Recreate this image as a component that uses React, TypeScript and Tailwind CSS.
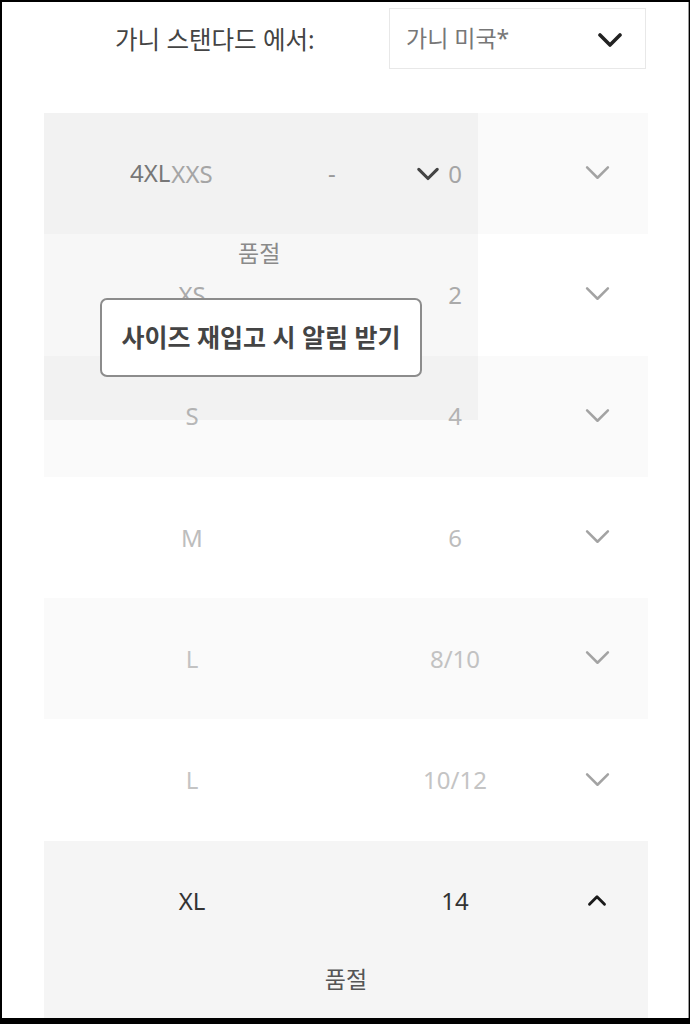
import React from 'react';

type Row = { size: string; num: string; bg: string; color: string };

const rows: Row[] = [
    { size: 'XXS', num: '0', bg: 'bg-[#fafafa]', color: 'text-[#ababab]' },
    { size: 'XS', num: '2', bg: 'bg-white', color: 'text-[#b0b0b0]' },
    { size: 'S', num: '4', bg: 'bg-[#fafafa]', color: 'text-[#b8b8b8]' },
    { size: 'M', num: '6', bg: 'bg-white', color: 'text-[#bdbdbd]' },
    { size: 'L', num: '8/10', bg: 'bg-[#fafafa]', color: 'text-[#c2c2c2]' },
    { size: 'L', num: '10/12', bg: 'bg-white', color: 'text-[#c4c4c4]' },
];

const Chevron = ({ up, className, stroke }: { up?: boolean; className?: string; stroke: number }) => (
    <svg viewBox="0 0 24 24" className={className} fill="none" stroke="currentColor" strokeWidth={stroke} strokeLinecap="round" strokeLinejoin="round">
        <path d={up ? 'M3 16 L12 7 L21 16' : 'M2 8 L12 18 L22 8'} />
    </svg>
);

const font = "font-['Noto_Sans','Noto_Sans_CJK_KR',sans-serif]";

export default function App() {
    return (
        <div className="w-[690px] h-[1024px] bg-black pt-[2px] pl-[2px] pr-[1px] pb-[6px]">
            <div className={`h-full bg-white border-r border-[#9a9a9a] overflow-hidden ${font}`}>
                {/* Kopfzeile mit Auswahl */}
                <div className="flex items-center h-[61px] mt-[6px]">
                    <span className="pl-[113px] text-[24.5px] text-[#444] leading-none mt-[3px]">가니 스탠다드 에서:</span>
                    <div className="ml-auto mr-[42px] w-[257px] h-[61px] border border-[#e8e8e8] flex items-center justify-between pl-[16px] pr-[23px]">
                        <span className="text-[23px] text-[#777] leading-none">가니 미국*</span>
                        <Chevron className="w-[24px] h-[24px] text-[#222]" stroke={3.6} />
                    </div>
                </div>

                {/* Größentabelle */}
                <div className="relative w-[604px] ml-[42px] mt-[44px]">
                    {rows.map((r, i) => (
                        <div key={i} className={`flex items-center h-[121.3px] ${r.bg}`}>
                            <div className={`w-[296px] text-center text-[24px] ${r.color}`}>{r.size}</div>
                            <div className={`w-[230px] text-center text-[24px] ${r.color}`}>{r.num}</div>
                            <div className="w-[54px] flex justify-center -mt-[4px]">
                                <Chevron className="w-[25px] h-[25px] text-[#a3a3a3]" stroke={2.4} />
                            </div>
                        </div>
                    ))}

                    {/* aufgeklappte Zeile */}
                    <div className="bg-[#f5f5f5] h-[180px]">
                        <div className="flex items-center h-[121px]">
                            <div className="w-[296px] text-center text-[24px] text-[#333]">XL</div>
                            <div className="w-[230px] text-center text-[24px] text-[#333]">14</div>
                            <div className="w-[54px] flex justify-center">
                                <Chevron up className="w-[20px] h-[20px] text-[#1a1a1a]" stroke={3.4} />
                            </div>
                        </div>
                        <div className="text-center text-[23px] text-[#555] leading-none mt-[6px]">품절</div>
                    </div>

                    {/* überlagertes Panel */}
                    <div className="absolute left-0 top-0 w-[434px] h-[307px] bg-black/[0.03]">
                        <div className="relative h-[120px] flex items-center">
                            <span className="absolute left-[86px] text-[24px] text-[#777]">4XL</span>
                            <span className="absolute left-[284px] text-[24px] text-[#9a9a9a]">-</span>
                            <Chevron className="absolute left-[373px] w-[22px] h-[22px] text-[#444]" stroke={3.4} />
                        </div>
                        <div className="text-[23px] text-[#8a8a8a] leading-none mt-[9px] ml-[194px]">품절</div>
                        <button className="ml-[56px] mt-[33px] w-[322px] h-[79px] bg-white border-2 border-[#8c8c8c] rounded-[7px] text-[25px] font-bold text-[#444] flex items-center justify-center">
                            사이즈 재입고 시 알림 받기
                        </button>
                    </div>
                </div>
            </div>
        </div>
    );
}
